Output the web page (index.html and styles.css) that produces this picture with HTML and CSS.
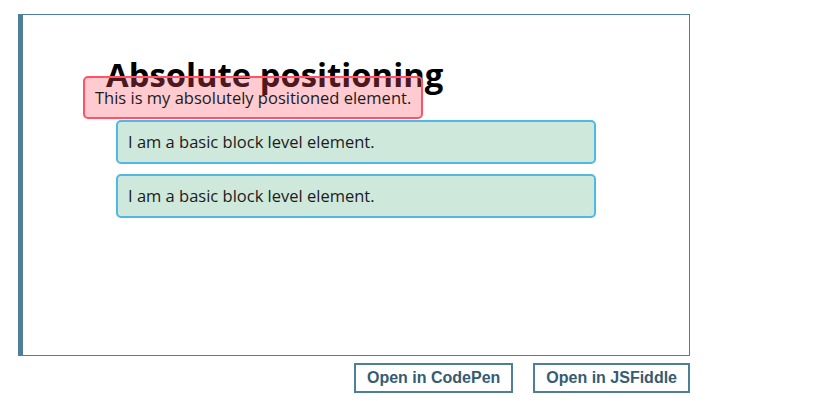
FILE: index.html
```html
<!DOCTYPE html>
<html lang="en">
<head>
<meta charset="utf-8">
<title>Absolute positioning</title>
<link rel="stylesheet" href="styles.css">
</head>
<body>
<div class="demo">
  <div class="frame">
    <div class="content">
      <h1 class="title">Absolute positioning</h1>
      <p class="block">I am a basic block level element.</p>
      <p class="block">I am a basic block level element.</p>
    </div>
    <p class="positioned">This is my absolutely positioned element.</p>
  </div>
  <div class="actions">
    <button class="btn" type="button">Open in CodePen</button>
    <button class="btn" type="button">Open in JSFiddle</button>
  </div>
</div>
</body>
</html>
```
FILE: styles.css
```css
html, body {
  margin: 0;
  padding: 0;
  background: #ffffff;
}

body {
  padding: 14px 0 0 18px;
  font-family: "Open Sans", "Noto Sans", sans-serif;
  color: #1b1b1b;
}

.demo {
  width: 672px;
}

.frame {
  position: relative;
  height: 340px;
  border: 1px solid #4d7f98;
  border-left: 5px solid #4d7f98;
  background: #ffffff;
}

.content {
  width: 500px;
  margin: 0 auto;
  padding-top: 1px;
}

.title {
  margin: 37px 0 23px;
  font-size: 32.8px;
  line-height: 44px;
  font-weight: 700;
  color: #000000;
}

.block {
  margin: 10px;
  padding: 10px;
  font-size: 16.5px;
  line-height: 20px;
  background-color: rgb(207, 232, 220);
  border: 2px solid rgb(79, 185, 227);
  border-radius: 5px;
}

.positioned {
  position: absolute;
  top: 61px;
  left: 60px;
  margin: 0;
  padding: 10px;
  font-size: 16.5px;
  line-height: 19px;
  white-space: nowrap;
  background: rgba(255, 84, 104, 0.3);
  border: 2px solid rgb(255, 84, 104);
  border-radius: 5px;
}

.actions {
  display: flex;
  justify-content: flex-end;
  gap: 20px;
  margin-top: 7px;
}

.btn {
  margin: 0;
  padding: 4px 11px;
  font-family: "Liberation Sans", Arial, sans-serif;
  font-size: 16px;
  line-height: 18px;
  font-weight: 700;
  color: #355c72;
  background: #ffffff;
  border: 2px solid #4d7f98;
  border-radius: 0;
}
```
